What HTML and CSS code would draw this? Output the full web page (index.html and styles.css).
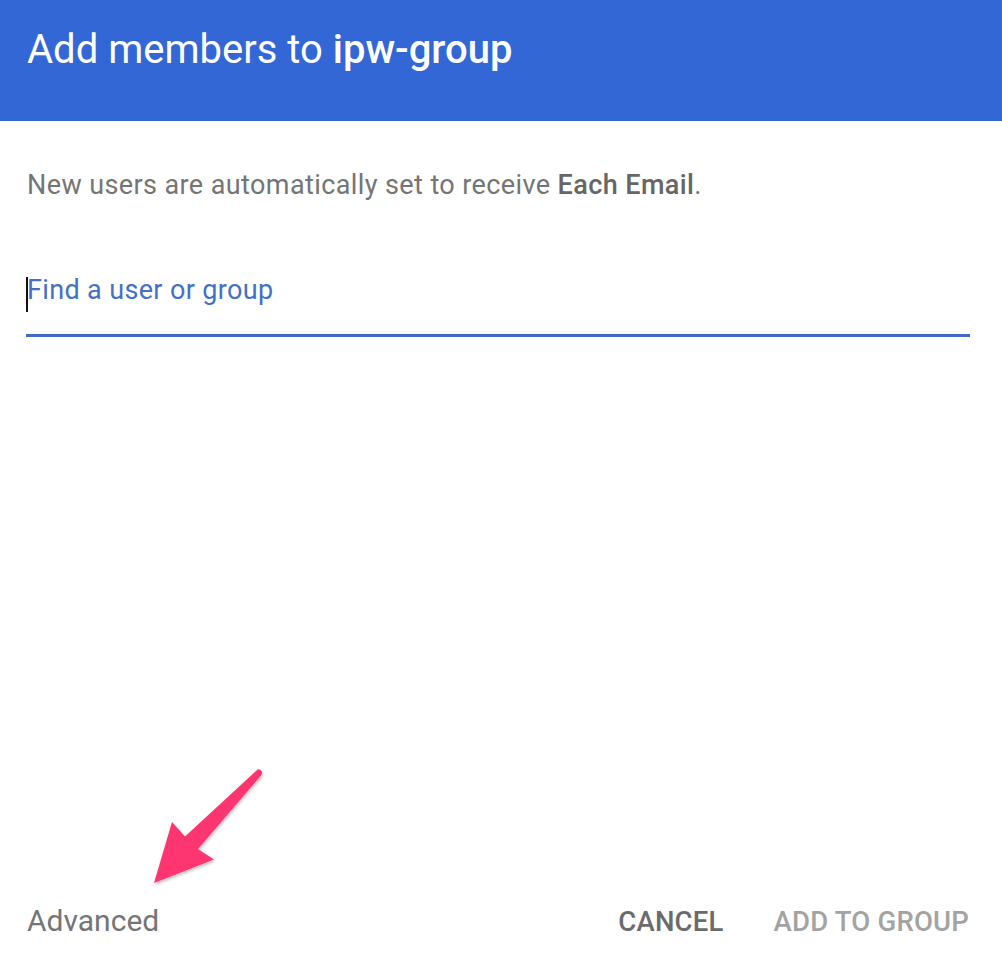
FILE: index.html
```html
<!DOCTYPE html>
<html>
<head>
<meta charset="utf-8">
<link rel="stylesheet" href="styles.css">
</head>
<body>
<div class="dialog">
  <header class="header">
    <h1 class="title">Add members to <b>ipw-group</b></h1>
  </header>
  <main class="content">
    <p class="note">New users are automatically set to receive <b>Each Email</b>.</p>
    <div class="field">
      <span class="caret"></span>
      <span class="placeholder">Find a user or group</span>
    </div>
  </main>
  <footer class="footer">
    <span class="advanced">Advanced</span>
    <div class="actions">
      <span class="btn cancel">CANCEL</span>
      <span class="btn add">ADD TO GROUP</span>
    </div>
  </footer>
  <svg class="arrow" width="140" height="140" viewBox="140 760 140 140">
    <defs>
      <filter id="sh" x="-20%" y="-20%" width="140%" height="140%">
        <feDropShadow dx="1" dy="2" stdDeviation="1.5" flood-color="#000" flood-opacity="0.25"/>
      </filter>
    </defs>
    <path filter="url(#sh)" fill="#fd3470" d="M256.5 770.5 Q259 768 261.5 771 Q262.5 773 261 775.5 L198 849 L214 859.5 L154 883 L172 822 L185 836.5 Z"/>
  </svg>
</div>
</body>
</html>
```

FILE: styles.css
```css
html, body {
  margin: 0;
  padding: 0;
  background: #fff;
}
body {
  font-family: Roboto, "Liberation Sans", sans-serif;
}
.dialog {
  position: relative;
  height: 956px;
  display: flex;
  flex-direction: column;
}
.header {
  background: #3367d6;
  height: 121px;
  padding: 0 27px;
  box-sizing: border-box;
  display: flex;
  align-items: flex-start;
}
.title {
  margin: 26px 0 0;
  font-size: 40px;
  font-weight: 400;
  color: #fff;
  line-height: 48px;
}
.title b {
  font-weight: 500;
}
.content {
  flex: 1;
  padding: 0 32px 0 26px;
}
.note {
  margin: 48px 0 0;
  font-size: 27px;
  line-height: 32px;
  letter-spacing: 0.4px;
  color: #757575;
  padding-left: 1px;
}
.note b {
  font-weight: 500;
  color: #666;
}
.field {
  margin-top: 71px;
  height: 62px;
  border-bottom: 3px solid #3f6bc5;
  display: flex;
  align-items: flex-start;
}
.caret {
  width: 2px;
  height: 35px;
  background: #111;
  margin-top: 5px;
}
.placeholder {
  font-size: 27px;
  line-height: 36px;
  letter-spacing: 0.35px;
  color: #4470c8;
  margin-left: -1px;
}
.footer {
  display: flex;
  justify-content: space-between;
  align-items: baseline;
  padding: 0 33px 16px 27px;
  line-height: 36px;
}
.advanced {
  font-size: 30px;
  color: #757575;
}
.actions {
  display: flex;
  align-items: baseline;
  gap: 50px;
}
.btn {
  font-size: 27.5px;
  font-weight: 500;
  letter-spacing: 0.2px;
}
.cancel {
  color: #6b6b6b;
}
.add {
  color: #a3a3a3;
}
.arrow {
  position: absolute;
  left: 140px;
  top: 760px;
}
```
